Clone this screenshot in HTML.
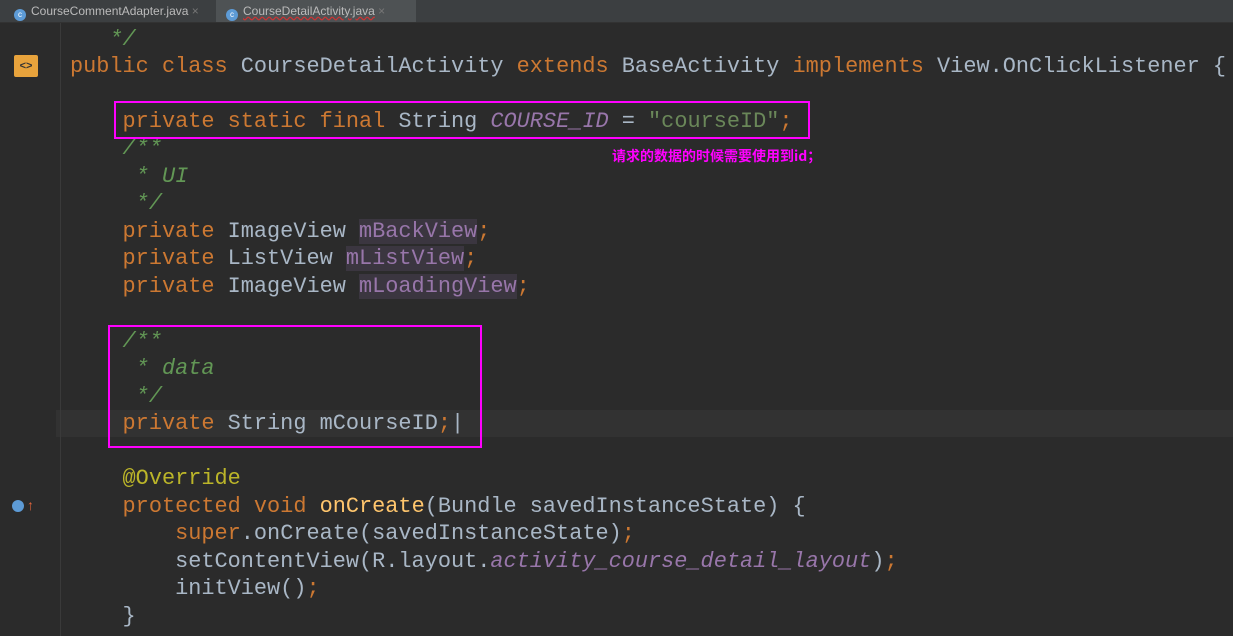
<!DOCTYPE html>
<html><head><meta charset="utf-8"><style>
body{margin:0;width:1233px;height:636px;background:#2b2b2b;overflow:hidden;position:relative;font-family:"Liberation Mono",monospace}
.tabs{position:absolute;left:0;top:0;width:1233px;height:22px;background:#3c3f41;border-bottom:1px solid #323232}
.tab{position:absolute;top:0;height:22px;font:12px "Liberation Sans",sans-serif;color:#bbb;line-height:22px}
.tab i{display:inline-block;width:12px;height:12px;border-radius:50%;background:#5d9bd6;vertical-align:-2px;margin-right:5px;font-style:normal;font-size:8px;color:#fff;text-align:center;line-height:12px}
.gutter{position:absolute;left:0;top:23px;width:56px;height:613px;background:#2b2b2b}
.fold{position:absolute;left:60px;top:23px;width:1px;height:613px;background:#3a3a3a}
.l{position:absolute;left:70px;font-size:21.9px;white-space:pre;color:#a9b7c6;line-height:27px}
.k{color:#cc7832}.c{color:#629755;font-style:italic}.f{color:#9876aa;background:#3b3640}.s{color:#6a8759}.cn{color:#9876aa;font-style:italic}
.m{color:#ffc66d}.a{color:#bbb529}
.box{position:absolute;border:2px solid #ff00ff}
.cur{background:#323232;position:absolute;left:56px;top:410px;width:1177px;height:27px}
</style></head><body>
<div class="tabs">
<div class="tab" style="left:14px"><i>c</i>CourseCommentAdapter.java <span style="color:#777">×</span></div>
<div class="tab" style="background:#4e5254;padding:0 10px;width:180px;left:216px"><i>c</i><span style="text-decoration:underline wavy #c33">CourseDetailActivity.java</span> <span style="color:#777">×</span></div>
</div>
<div class="gutter"></div>
<div class="cur"></div>
<div class="fold"></div>
<div style="position:absolute;left:14px;top:55px;width:24px;height:22px;background:#e8a33c;border-radius:2px;color:#333;font:bold 11px sans-serif;text-align:center;line-height:22px">&lt;&gt;</div>
<div style="position:absolute;left:12px;top:500px;width:12px;height:12px;border-radius:50%;background:#5d9bd6"></div>
<div style="position:absolute;left:27px;top:497px;color:#e0643c;font:bold 14px sans-serif">↑</div>
<div class="l" style="top:26px"><span class="c">   */</span></div>
<div class="l" style="top:53px"><span class="k">public class </span>CourseDetailActivity <span class="k">extends </span>BaseActivity <span class="k">implements </span>View.OnClickListener {</div>
<div class="l" style="top:108px">    <span class="k">private static final </span>String <span class="cn">COURSE_ID</span> = <span class="s">"courseID"</span><span class="k">;</span></div>
<div class="l" style="top:135px"><span class="c">    /**</span></div>
<div class="l" style="top:163px"><span class="c">     * UI</span></div>
<div class="l" style="top:190px"><span class="c">     */</span></div>
<div class="l" style="top:218px">    <span class="k">private </span>ImageView <span class="f">mBackView</span><span class="k">;</span></div>
<div class="l" style="top:245px">    <span class="k">private </span>ListView <span class="f">mListView</span><span class="k">;</span></div>
<div class="l" style="top:273px">    <span class="k">private </span>ImageView <span class="f">mLoadingView</span><span class="k">;</span></div>
<div class="l" style="top:328px"><span class="c">    /**</span></div>
<div class="l" style="top:355px"><span class="c">     * data</span></div>
<div class="l" style="top:383px"><span class="c">     */</span></div>
<div class="l" style="top:410px">    <span class="k">private </span>String mCourseID<span class="k">;</span>|</div>
<div class="l" style="top:465px">    <span class="a">@Override</span></div>
<div class="l" style="top:493px">    <span class="k">protected void </span><span class="m">onCreate</span>(Bundle savedInstanceState) {</div>
<div class="l" style="top:520px">        <span class="k">super</span>.onCreate(savedInstanceState)<span class="k">;</span></div>
<div class="l" style="top:548px">        setContentView(R.layout.<span class="cn">activity_course_detail_layout</span>)<span class="k">;</span></div>
<div class="l" style="top:575px">        initView()<span class="k">;</span></div>
<div class="l" style="top:603px">    }</div>
<div class="box" style="left:114px;top:101px;width:692px;height:34px"></div>
<div class="box" style="left:108px;top:325px;width:370px;height:119px"></div>
<div style="position:absolute;left:612px;top:146px;color:#ff00ff;font:bold 14px 'Noto Sans CJK SC',sans-serif">请求的数据的时候需要使用到id；</div>
</body></html>
